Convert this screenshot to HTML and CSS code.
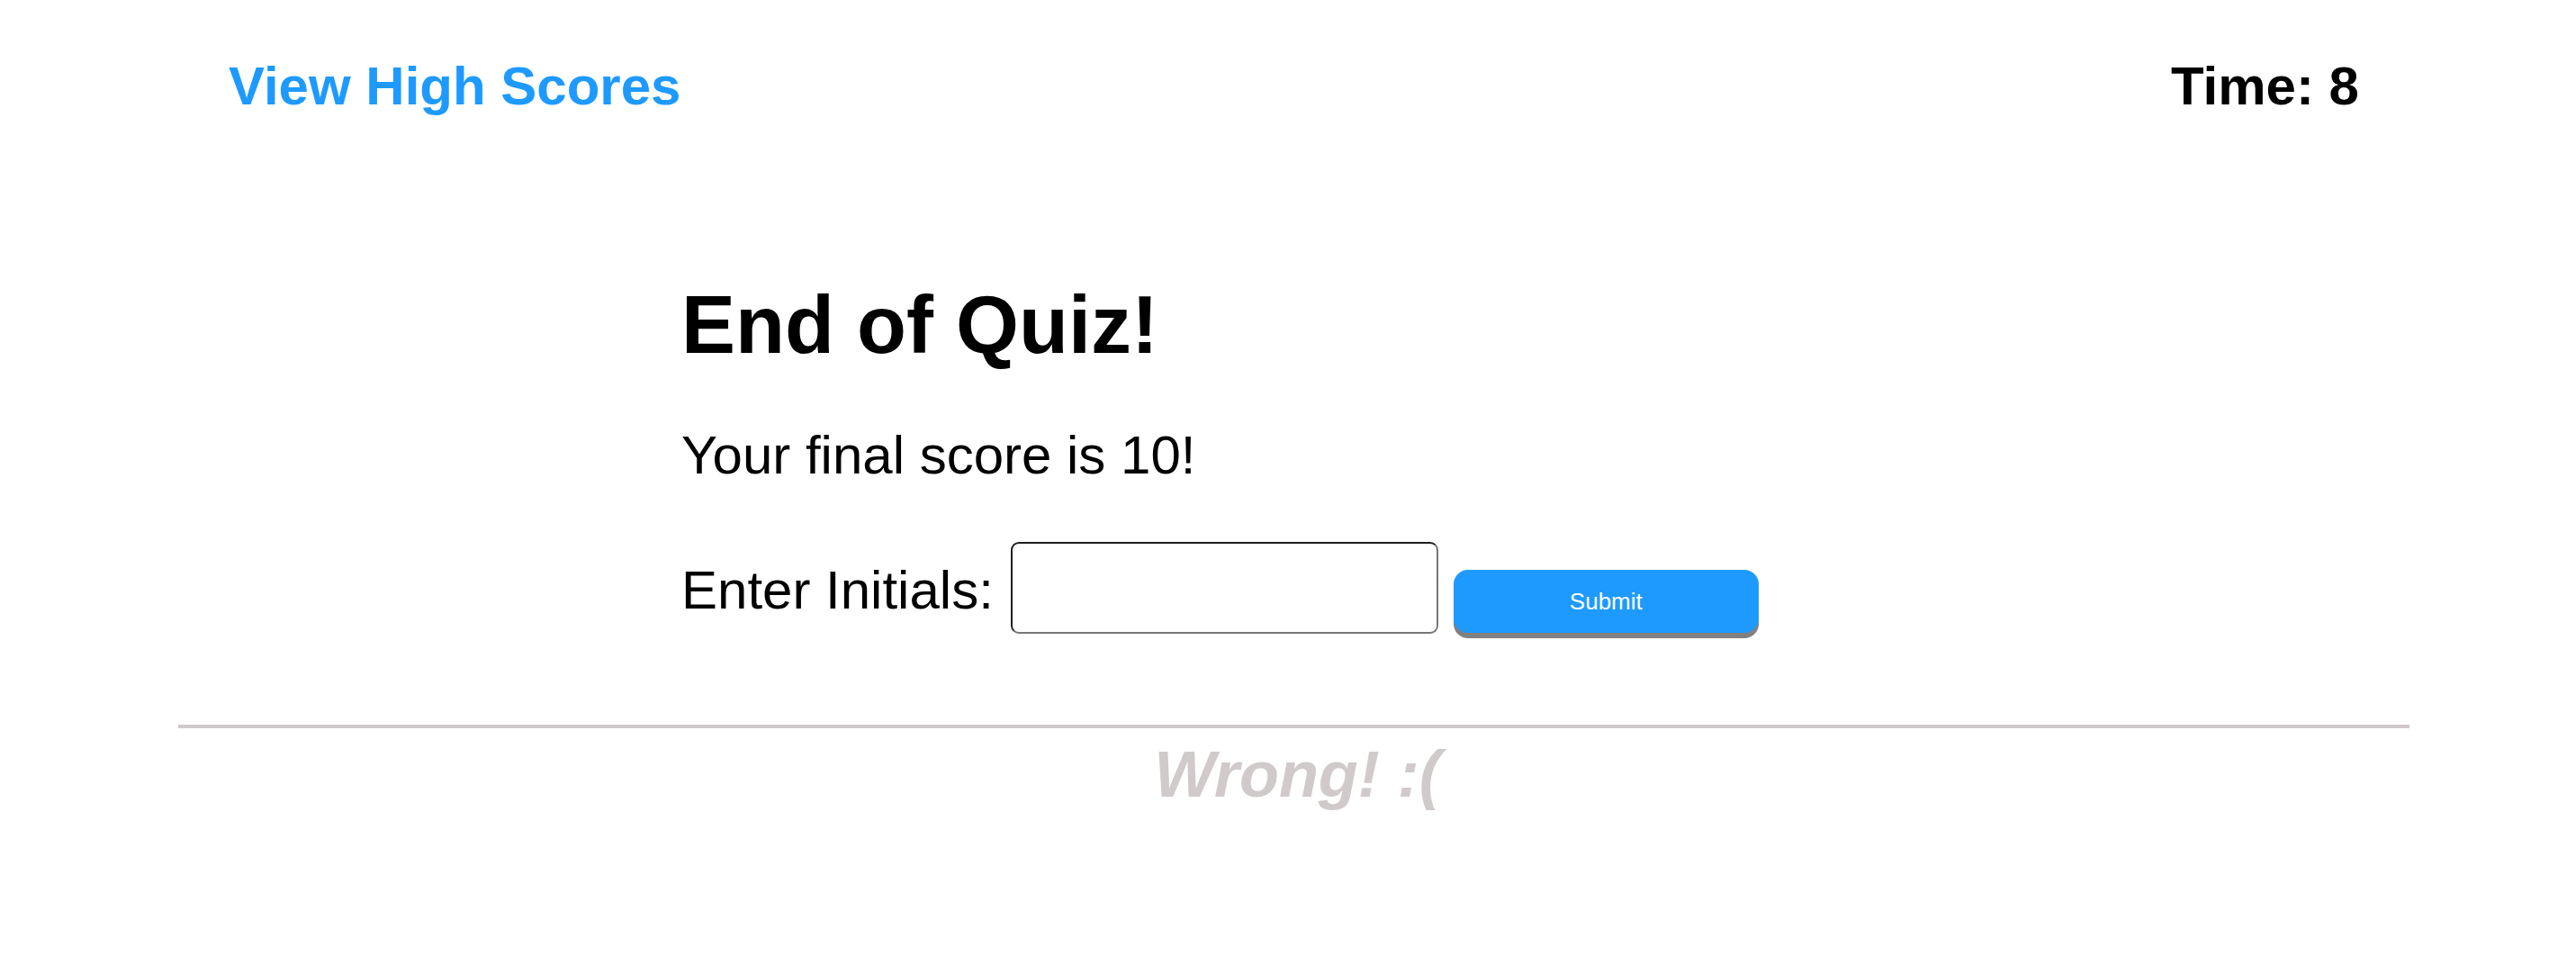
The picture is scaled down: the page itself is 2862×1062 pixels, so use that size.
FILE: index.html
```html
<!DOCTYPE html>
<html lang="en">
<head>
<meta charset="utf-8">
<title>Code Quiz</title>
<link rel="stylesheet" href="styles.css">
</head>
<body>
<header class="top-bar">
  <a class="high-scores" href="#">View High Scores</a>
  <span class="timer">Time: 8</span>
</header>
<main class="quiz">
  <h1 class="quiz-title">End of Quiz!</h1>
  <p class="final-score">Your final score is 10!</p>
  <form class="initials-row">
    <label class="initials-label" for="initials">Enter Initials:</label>
    <input class="initials-input" id="initials" type="text">
    <button class="submit-btn" type="button">Submit</button>
  </form>
</main>
<footer class="feedback">
  <hr class="divider">
  <p class="feedback-text">Wrong! :(</p>
</footer>
</body>
</html>
```
FILE: styles.css
```css
html, body {
  margin: 0;
  padding: 0;
  background: #ffffff;
}
body {
  font-family: "Liberation Sans", Arial, Helvetica, sans-serif;
  color: #000000;
}
.top-bar {
  display: flex;
  justify-content: space-between;
  align-items: flex-start;
  padding: 61px 241px 0 254px;
  font-size: 60px;
  font-weight: bold;
  line-height: 69px;
}
.high-scores {
  color: #1e9aff;
  text-decoration: none;
}
.timer {
  color: #000000;
}
.quiz {
  width: 1348px;
  margin: 0 auto;
}
.quiz-title {
  margin: 180px 0 0 0;
  font-size: 90px;
  font-weight: bold;
  line-height: 103px;
}
.final-score {
  margin: 58px 0 0 0;
  font-size: 60px;
  line-height: 69px;
}
.initials-row {
  display: flex;
  align-items: flex-start;
  margin: 62px 0 0 0;
}
.initials-label {
  margin-top: 19px;
  font-size: 60px;
  line-height: 69px;
}
.initials-input {
  box-sizing: border-box;
  width: 475px;
  height: 102px;
  margin: 0 0 0 19px;
  padding: 0 12px;
  border: 2px solid;
  border-color: #1f1f1f #777777 #777777 #1f1f1f;
  border-radius: 9px;
  background: #ffffff;
  font-family: inherit;
  font-size: 40px;
}
.submit-btn {
  box-sizing: border-box;
  width: 339px;
  height: 70px;
  margin: 31px 0 0 17px;
  padding: 0;
  border: none;
  border-radius: 16px;
  background: #1e9aff;
  box-shadow: 0 6px 0 #808080;
  color: #ffffff;
  font-family: inherit;
  font-size: 26px;
}
.feedback {
  margin: 101px 185px 0 198px;
}
.divider {
  margin: 0;
  height: 0;
  border: none;
  border-top: 4px solid #d1caca;
}
.feedback-text {
  margin: 10px 0 0 0;
  padding-left: 8px;
  text-align: center;
  font-size: 72px;
  font-weight: bold;
  font-style: italic;
  line-height: 83px;
  color: #d1caca;
}
```
